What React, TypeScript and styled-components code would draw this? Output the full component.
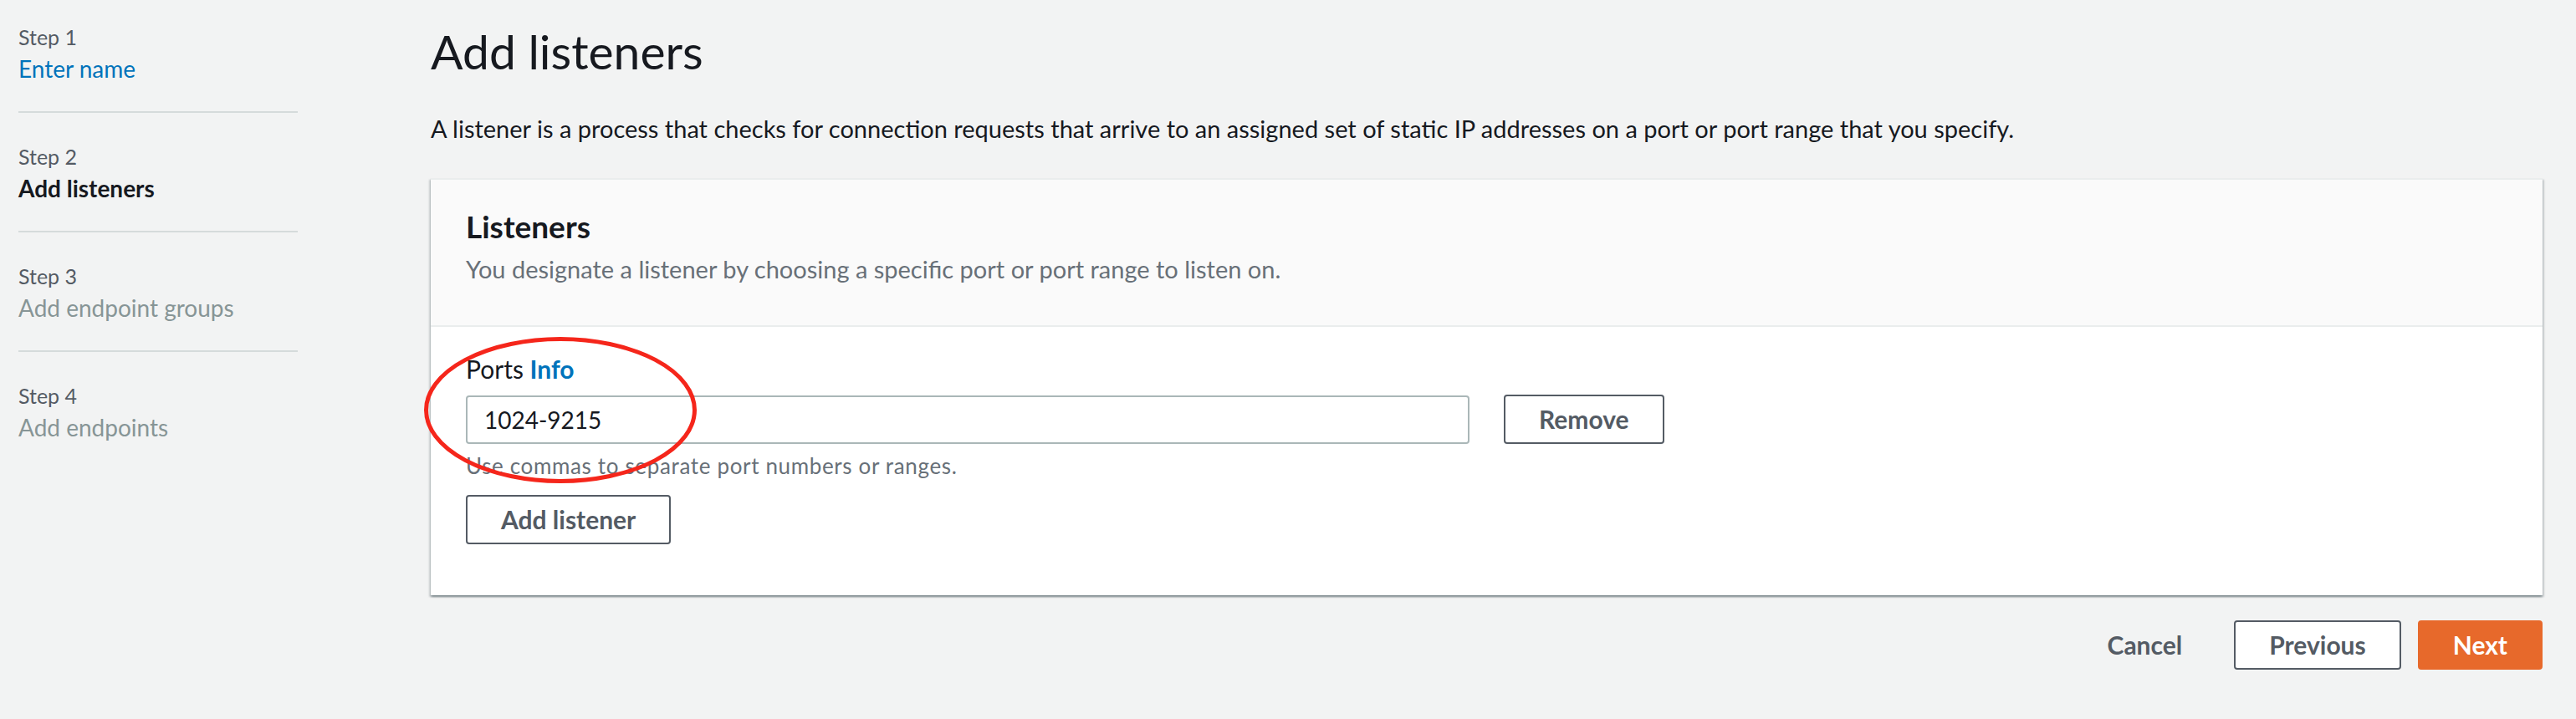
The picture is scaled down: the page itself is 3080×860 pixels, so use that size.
import React from 'react';
import styled, { createGlobalStyle } from 'styled-components';

const GlobalStyle = createGlobalStyle`
  html, body {
    margin: 0;
    padding: 0;
    background: #f2f3f3;
  }
  body {
    font-family: Lato, "Liberation Sans", sans-serif;
    color: #16191f;
    -webkit-font-smoothing: antialiased;
  }
  * {
    box-sizing: border-box;
  }
`;

type StepState = 'done' | 'current' | 'todo';

const Page = styled.div`
  display: grid;
  grid-template-columns: 334px 1fr;
  column-gap: 159px;
  padding: 25px 40px 0 22px;
  min-height: 860px;
`;

const Steps = styled.nav`
  display: flex;
  flex-direction: column;
  padding-top: 2px;
`;

const Step = styled.div`
  padding-bottom: 31px;
  & + & {
    border-top: 2px solid #d5dbdb;
    padding-top: 35px;
  }
`;

const StepLabel = styled.div`
  font-size: 25px;
  line-height: 35px;
  color: #545b64;
`;

const StepName = styled.div<{ $state: StepState }>`
  font-size: 28px;
  line-height: 40px;
  font-weight: ${(p) => (p.$state === 'current' ? 700 : 400)};
  color: ${(p) =>
    p.$state === 'done' ? '#0073bb' : p.$state === 'current' ? '#16191f' : '#879596'};
`;

const Main = styled.main`
  display: flex;
  flex-direction: column;
`;

const Title = styled.h1`
  margin: 0;
  font-size: 57px;
  line-height: 72px;
  font-weight: 400;
`;

const Intro = styled.p`
  margin: 37px 0 0;
  font-size: 29px;
  line-height: 40px;
`;

const Card = styled.section`
  margin-top: 39px;
  background: #fff;
  border-top: 2px solid #eaeded;
  box-shadow: 0 2px 2px 0 rgba(0, 28, 36, 0.3), 2px 2px 2px 0 rgba(0, 28, 36, 0.15),
    -2px 2px 2px 0 rgba(0, 28, 36, 0.15);
`;

const CardHeader = styled.header`
  background: #fafafa;
  padding: 34px 40px 47px 42px;
  border-bottom: 2px solid #eaeded;
`;

const CardTitle = styled.h2`
  margin: 0;
  font-size: 37px;
  line-height: 44px;
  font-weight: 700;
`;

const CardSubtitle = styled.p`
  margin: 9px 0 0;
  font-size: 29px;
  line-height: 40px;
  color: #687078;
`;

const CardBody = styled.div`
  padding: 30px 40px 61px 42px;
`;

const Field = styled.div`
  position: relative;
  display: flex;
  flex-direction: column;
  align-items: flex-start;
`;

const FieldLabel = styled.label`
  font-size: 30px;
  line-height: 40px;
`;

const InfoLink = styled.a`
  color: #0073bb;
  font-weight: 700;
  text-decoration: none;
`;

const InputRow = styled.div`
  display: flex;
  align-items: center;
  gap: 41px;
  margin-top: 11px;
`;

const TextInput = styled.input`
  width: 1200px;
  height: 58px;
  padding: 0 20px;
  border: 2px solid #aab7b8;
  border-radius: 4px;
  font-family: inherit;
  font-size: 28px;
  color: #16191f;
  background: #fff;
  outline: none;
`;

const Hint = styled.div`
  margin-top: 10px;
  font-size: 26px;
  line-height: 32px;
  letter-spacing: 0.65px;
  color: #687078;
`;

const Button = styled.button<{ $variant?: 'normal' | 'primary' | 'link' }>`
  height: 59px;
  padding: 0 40px;
  border-radius: 4px;
  font-family: inherit;
  font-size: 30px;
  font-weight: 700;
  line-height: 39px;
  cursor: pointer;
  border: 2px solid
    ${(p) => (p.$variant === 'primary' ? '#e7692b' : p.$variant === 'link' ? 'transparent' : '#545b64')};
  background: ${(p) =>
    p.$variant === 'primary' ? '#e7692b' : p.$variant === 'link' ? 'transparent' : '#fff'};
  color: ${(p) => (p.$variant === 'primary' ? '#fff' : '#545b64')};
`;

const AddButton = styled(Button)`
  margin-top: 19px;
`;

const Annotation = styled.svg`
  position: absolute;
  left: -50px;
  top: -18px;
  pointer-events: none;
`;

const Footer = styled.div`
  display: flex;
  justify-content: flex-end;
  align-items: center;
  gap: 20px;
  margin-top: 30px;
`;

const steps: { n: number; name: string; state: StepState }[] = [
  { n: 1, name: 'Enter name', state: 'done' },
  { n: 2, name: 'Add listeners', state: 'current' },
  { n: 3, name: 'Add endpoint groups', state: 'todo' },
  { n: 4, name: 'Add endpoints', state: 'todo' },
];

export default function App() {
  return (
    <>
      <GlobalStyle />
      <Page>
        <Steps>
          {steps.map((s) => (
            <Step key={s.n}>
              <StepLabel>Step {s.n}</StepLabel>
              <StepName $state={s.state}>{s.name}</StepName>
            </Step>
          ))}
        </Steps>
        <Main>
          <Title>Add listeners</Title>
          <Intro>
            A listener is a process that checks for connection requests that arrive to an assigned set of
            static IP addresses on a port or port range that you specify.
          </Intro>
          <Card>
            <CardHeader>
              <CardTitle>Listeners</CardTitle>
              <CardSubtitle>
                You designate a listener by choosing a specific port or port range to listen on.
              </CardSubtitle>
            </CardHeader>
            <CardBody>
              <Field>
                <FieldLabel>
                  Ports <InfoLink href="#">Info</InfoLink>
                </FieldLabel>
                <InputRow>
                  <TextInput defaultValue="1024-9215" />
                  <Button>Remove</Button>
                </InputRow>
                <Hint>Use commas to separate port numbers or ranges.</Hint>
                <AddButton>Add listener</AddButton>
                <Annotation width="326" height="175" viewBox="0 0 326 175">
                  <ellipse cx="163" cy="87.5" rx="160.5" ry="85" fill="none" stroke="#f5261b" strokeWidth="5" />
                </Annotation>
              </Field>
            </CardBody>
          </Card>
          <Footer>
            <Button $variant="link">Cancel</Button>
            <Button>Previous</Button>
            <Button $variant="primary">Next</Button>
          </Footer>
        </Main>
      </Page>
    </>
  );
}
